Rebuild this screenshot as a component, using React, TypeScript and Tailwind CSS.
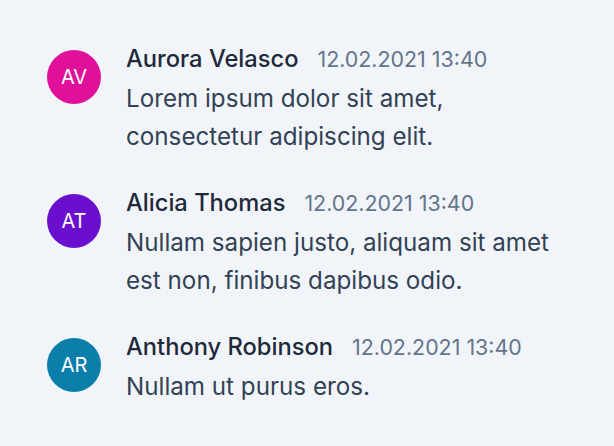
export default function App() {
  const items = [
    { initials: "AV", color: "bg-[#e0109a]", name: "Aurora Velasco", date: "12.02.2021 13:40", lines: ["Lorem ipsum dolor sit amet,", "consectetur adipiscing elit."] },
    { initials: "AT", color: "bg-[#6a0fcd]", name: "Alicia Thomas", date: "12.02.2021 13:40", lines: ["Nullam sapien justo, aliquam sit amet", "est non, finibus dapibus odio."] },
    { initials: "AR", color: "bg-[#0b7ea9]", name: "Anthony Robinson", date: "12.02.2021 13:40", lines: ["Nullam ut purus eros."] },
  ];
  return (
    <div className="min-h-screen w-full bg-[#f1f5f9] pl-[47px] pt-[43px]" style={{ fontFamily: "Inter, 'Noto Sans', sans-serif" }}>
      <div className="flex flex-col gap-[31px]">
        {items.map((it) => (
          <div key={it.name} className="flex items-start gap-[25px]">
            <div className={`${it.color} mt-[7px] flex h-[54px] w-[54px] shrink-0 items-center justify-center rounded-full text-[20px] font-normal text-white`}>
              {it.initials}
            </div>
            <div className="flex flex-col">
              <div className="flex items-baseline gap-[19px] leading-[32px]">
                <span className="text-[23.7px] font-medium text-[#1e293b]">{it.name}</span>
                <span className="text-[21.4px] text-[#64748b]">{it.date}</span>
              </div>
              <div className="mt-[5px] text-[24.2px] leading-[38px] text-[#334155]">
                {it.lines.map((l) => (
                  <div key={l}>{l}</div>
                ))}
              </div>
            </div>
          </div>
        ))}
      </div>
    </div>
  );
}
